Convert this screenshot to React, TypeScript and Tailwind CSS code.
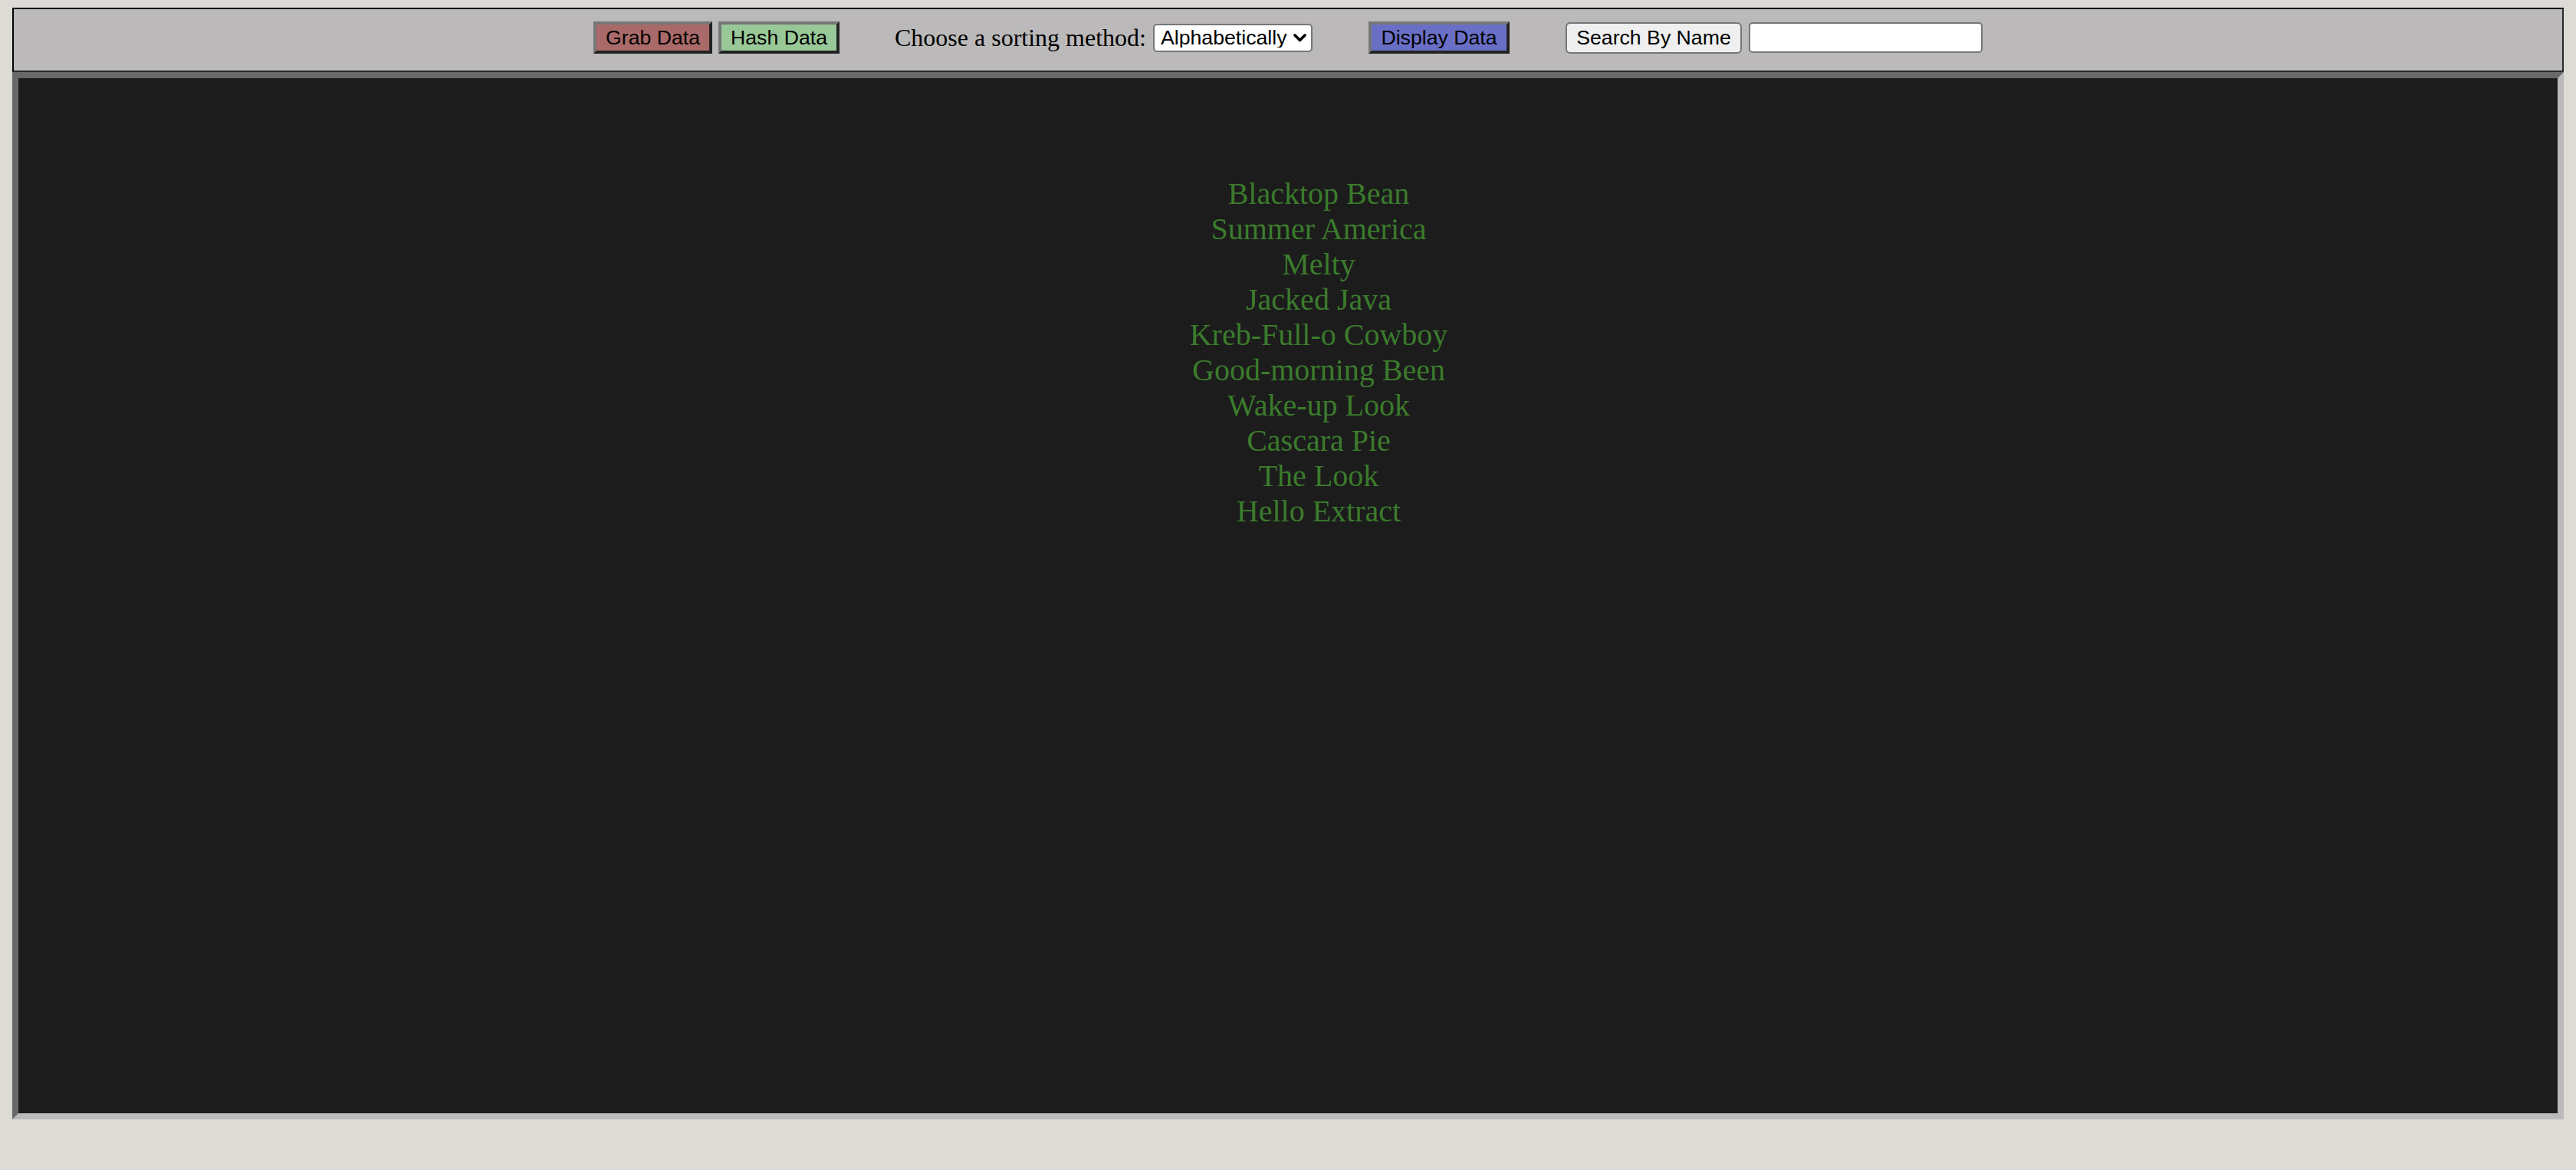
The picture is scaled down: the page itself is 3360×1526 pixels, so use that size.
import { useState } from 'react';

const coffees = [
   'Blacktop Bean',
   'Summer America',
   'Melty',
   'Jacked Java',
   'Kreb-Full-o Cowboy',
   'Good-morning Been',
   'Wake-up Look',
   'Cascara Pie',
   'The Look',
   'Hello Extract',
];

const btn = "h-[42px] flex items-center justify-center px-[12px] border-[4px] border-t-[#777777] border-l-[#777777] border-b-[#222222] border-r-[#222222] text-black text-[26.67px] font-['Liberation_Sans',Arial,sans-serif] leading-none";

export default function App() {

   const [sortBy, setSortBy] = useState('alpha');
   const [search, setSearch] = useState('');

   return (
      <div className="min-h-screen bg-[#dcdbd6] px-[16px] pt-[10px]">
         <div className="h-[84px] flex items-center justify-center pb-[6px] bg-[#bbb9ba] border-[2px] border-t-black border-l-black border-b-[#2a2a2a] border-r-[#2a2a2a]">
            <button className={`${btn} w-[155px] bg-[#aa6a69]`}>Grab Data</button>
            <button className={`${btn} w-[158px] ml-[8px] bg-[#98c897]`}>Hash Data</button>

            <span className="ml-[72px] text-[32px] text-black font-['Liberation_Serif','Times_New_Roman',serif]">
               Choose a sorting method:
            </span>
            <div className="relative ml-[9px] w-[208px] h-[37px]">
               <select
                  value={sortBy}
                  onChange={(e) => setSortBy(e.target.value)}
                  className="appearance-none w-full h-full bg-white border-[2px] border-[#767676] rounded-[5px] pl-[8px] text-[26.67px] text-black font-['Liberation_Sans',Arial,sans-serif] leading-none outline-none"
               >
                  <option value="alpha">Alphabetically</option>
                  <option value="price">By Price</option>
               </select>
               <svg className="absolute right-[8px] top-[13px] pointer-events-none" width="17" height="11" viewBox="0 0 17 11">
                  <polyline points="2,2 8.5,8.5 15,2" fill="none" stroke="black" strokeWidth="3.6" strokeLinecap="round" strokeLinejoin="round" />
               </svg>
            </div>

            <button className={`${btn} w-[184px] ml-[73px] bg-[#6a6fc6]`}>Display Data</button>

            <button className="ml-[73px] w-[230px] h-[41px] flex items-center justify-center bg-[#efefef] border-[2px] border-[#767676] rounded-[6px] text-black text-[26.67px] font-['Liberation_Sans',Arial,sans-serif] leading-none">
               Search By Name
            </button>
            <input
               type="text"
               value={search}
               onChange={(e) => setSearch(e.target.value)}
               className="ml-[9px] w-[305px] h-[40px] bg-white border-[2px] border-[#767676] rounded-[5px] px-[4px] text-[26.67px] font-['Liberation_Sans',Arial,sans-serif] outline-none"
            />
         </div>

         <div className="h-[1366px] bg-[#1c1c1c] border-[8px] border-t-[#686868] border-l-[#686868] border-b-[#bbb9ba] border-r-[#bbb9ba]">
            <ul className="pt-[128px] pl-[80px] text-center text-[40px] leading-[46px] text-[#3b7b2c] font-['Liberation_Serif','Times_New_Roman',serif]">
               {
                  coffees.map( (name) => (
                     <li key={ name }>{ name }</li>
                  ))
               }
            </ul>
         </div>
      </div>
   );
}
